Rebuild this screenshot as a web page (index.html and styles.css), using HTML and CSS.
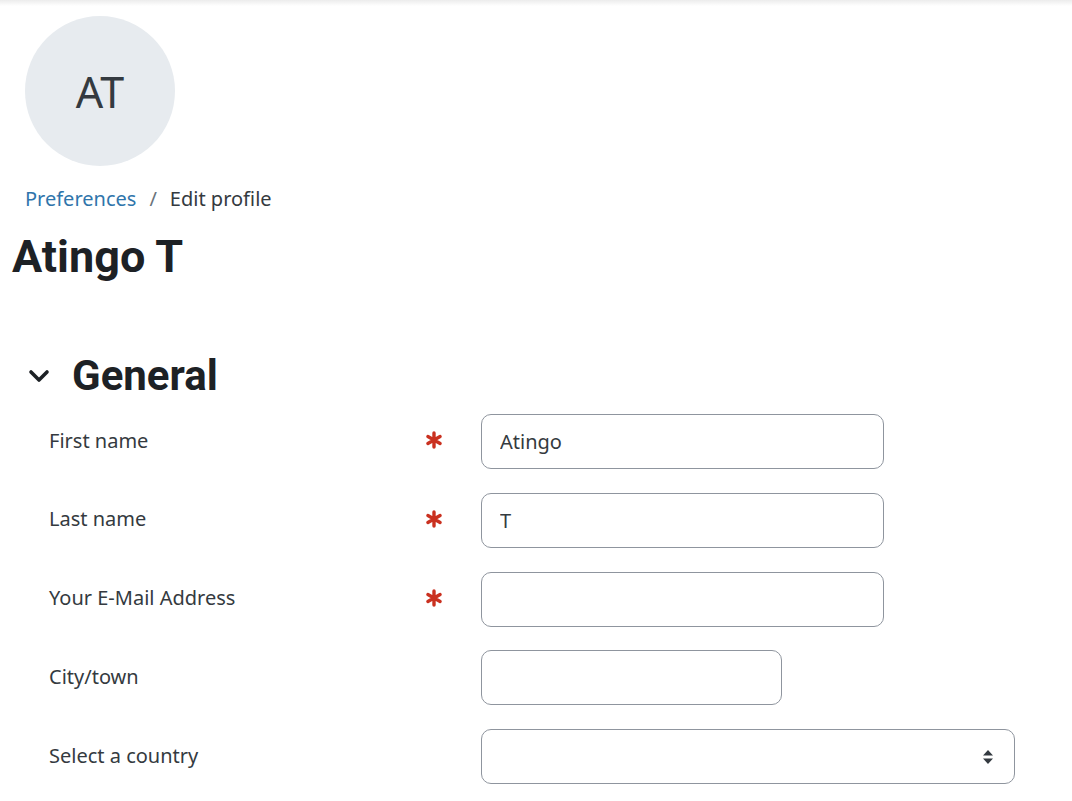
FILE: index.html
```html
<!DOCTYPE html>
<html lang="en">
<head>
    <meta charset="UTF-8">
    <meta name="viewport" content="width=device-width, initial-scale=1.0">
    <title>Edit profile</title>
    <link rel="stylesheet" href="styles.css">
</head>
<body>
    <div class="nav-shadow"></div>

    <div class="page">
        <div class="avatar">AT</div>

        <nav class="breadcrumb">
            <a href="#">Preferences</a>
            <span class="sep">/</span>
            <span class="current">Edit profile</span>
        </nav>

        <h1 class="page-title">Atingo T</h1>

        <section class="section">
            <div class="section-head">
                <svg class="chevron" width="22" height="14" viewBox="0 0 22 14">
                    <path d="M3 3 L11 11 L19 3" fill="none" stroke="#1d2125" stroke-width="3.6" stroke-linecap="round" stroke-linejoin="round"/>
                </svg>
                <h3>General</h3>
            </div>

            <form class="profile-form">
                <div class="row">
                    <label for="firstname">First name</label>
                    <span class="req">
                        <svg width="18" height="18" viewBox="0 0 18 18"><path d="M9 2 V16 M2.9 5.5 L15.1 12.5 M2.9 12.5 L15.1 5.5" stroke="#ca3120" stroke-width="3.4" stroke-linecap="round"/></svg>
                    </span>
                    <input type="text" id="firstname" class="field" value="Atingo">
                </div>

                <div class="row">
                    <label for="lastname">Last name</label>
                    <span class="req">
                        <svg width="18" height="18" viewBox="0 0 18 18"><path d="M9 2 V16 M2.9 5.5 L15.1 12.5 M2.9 12.5 L15.1 5.5" stroke="#ca3120" stroke-width="3.4" stroke-linecap="round"/></svg>
                    </span>
                    <input type="text" id="lastname" class="field" value="T">
                </div>

                <div class="row">
                    <label for="email">Your E-Mail Address</label>
                    <span class="req">
                        <svg width="18" height="18" viewBox="0 0 18 18"><path d="M9 2 V16 M2.9 5.5 L15.1 12.5 M2.9 12.5 L15.1 5.5" stroke="#ca3120" stroke-width="3.4" stroke-linecap="round"/></svg>
                    </span>
                    <input type="text" id="email" class="field">
                </div>

                <div class="row">
                    <label for="city">City/town</label>
                    <span class="req"></span>
                    <input type="text" id="city" class="field field-short">
                </div>

                <div class="row">
                    <label for="country">Select a country</label>
                    <span class="req"></span>
                    <div class="select field-wide">
                        <svg class="select-arrows" width="12" height="16" viewBox="0 0 12 16"><path d="M6 1 L11 6.5 H1 Z M6 15 L11 9.5 H1 Z" fill="#343a40"/></svg>
                    </div>
                </div>
            </form>
        </section>
    </div>
</body>
</html>
```

FILE: styles.css
```css
body {
    margin: 0;
    padding: 0;
    background-color: #fff;
    color: #1d2125;
    font-family: "Noto Sans", "Open Sans", sans-serif;
    font-size: 20px;
}

.nav-shadow {
    height: 6px;
    background: linear-gradient(#ececec, #fff);
}

.page {
    padding: 10px 0 0 12px;
}

.avatar {
    width: 150px;
    height: 150px;
    margin-left: 13px;
    border-radius: 50%;
    background-color: #e7ebef;
    color: #343a40;
    font-size: 43px;
    display: flex;
    align-items: center;
    justify-content: center;
}

.breadcrumb {
    margin: 19px 0 0 13px;
    display: flex;
    align-items: center;
    line-height: 28px;
}

.breadcrumb a {
    color: #2f75ab;
    text-decoration: none;
}

.breadcrumb .sep {
    color: #6a737b;
    margin: 0 13px;
}

.breadcrumb .current {
    color: #343a40;
}

.page-title {
    font-family: Roboto, sans-serif;
    font-weight: 700;
    font-size: 45px;
    line-height: 56px;
    margin: 16px 0 0 0;
}

.section {
    margin-top: 66px;
}

.section-head {
    display: flex;
    align-items: center;
    padding-left: 16px;
}

.chevron {
    margin-right: 22px;
}

.section-head h3 {
    font-family: Roboto, sans-serif;
    font-weight: 700;
    font-size: 42px;
    line-height: 50px;
    margin: 0;
}

.profile-form {
    margin-top: 13px;
    display: flex;
    flex-direction: column;
    gap: 23.75px;
}

.row {
    display: flex;
    align-items: center;
    padding-left: 37px;
}

.row label {
    width: 376px;
    color: #343a40;
    margin-bottom: 3px;
}

.req {
    width: 56px;
    display: flex;
    align-items: center;
    margin-bottom: 3px;
}

.field {
    box-sizing: border-box;
    width: 403px;
    height: 55px;
    padding: 0 18px;
    border: 1px solid #8f959e;
    border-radius: 10px;
    font-family: "Noto Sans", "Open Sans", sans-serif;
    font-size: 20px;
    color: #343a40;
    background: #fff;
}

.field-short {
    width: 301px;
}

.select {
    box-sizing: border-box;
    width: 534px;
    height: 55px;
    border: 1px solid #8f959e;
    border-radius: 10px;
    display: flex;
    align-items: center;
    justify-content: flex-end;
    padding-right: 20px;
}
```
